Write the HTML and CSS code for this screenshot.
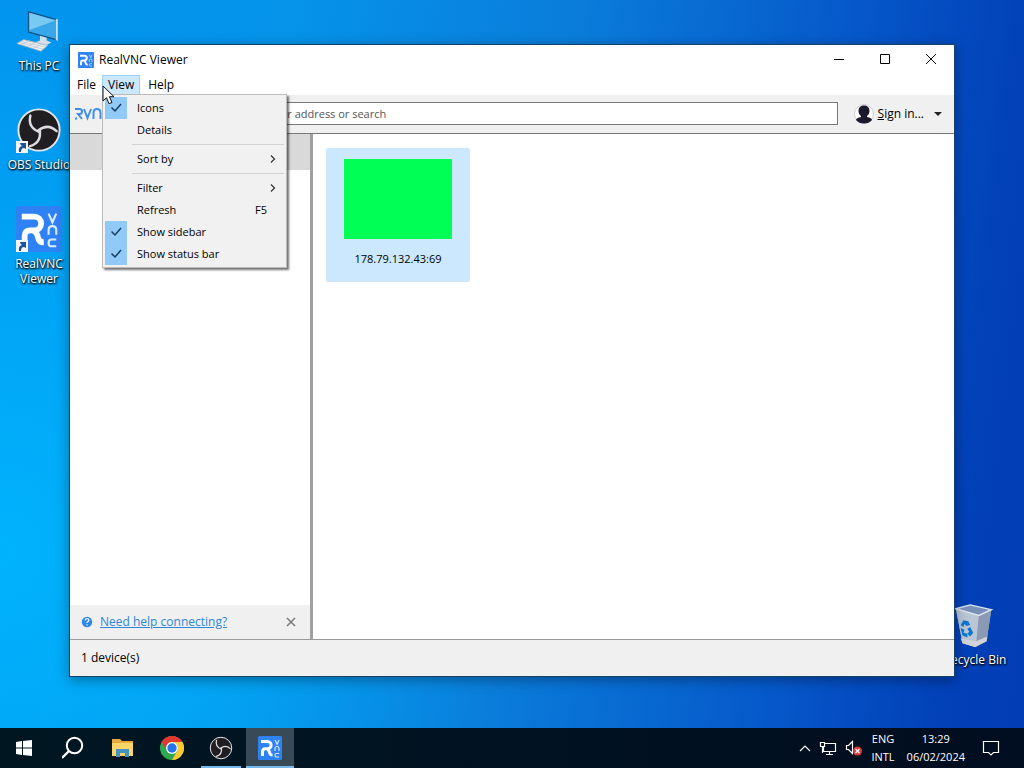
FILE: index.html
```html
<!DOCTYPE html>
<html lang="en">
<head>
<meta charset="utf-8">
<title>RealVNC Viewer</title>
<link rel="stylesheet" href="styles.css">
</head>
<body>
<svg class="defs" aria-hidden="true">
  <symbol id="vnc" viewBox="0 0 48 48">
    <rect width="48" height="48" rx="3" fill="#2f82f3"/>
    <path d="M6 11h13a7 7 0 0 1 0 14.500h-4q-6 0-6 6V40M18 26q4 1 5 7 1 5 6 5" fill="none" stroke="#fff" stroke-width="6"/>
    <path d="M34 8l4 9 4-9M34 30v-5q0-4 4-4t4 4v5M42 35h-5q-3 0-3 3.500t3 3.500h5" fill="none" stroke="#dcecff" stroke-width="2.200"/>
  </symbol>
  <symbol id="obs" viewBox="0 0 48 48">
    <circle cx="24" cy="24" r="21.500" fill="#211e21" stroke="#e8e6ec" stroke-width="2"/>
    <g fill="none" stroke="#dcdbe2" stroke-width="2.600" stroke-linecap="round">
      <path d="M24 26Q12 21 15 9"/>
      <path d="M24 26Q12 21 15 9" transform="rotate(120 24 25)"/>
      <path d="M24 26Q12 21 15 9" transform="rotate(240 24 25)"/>
    </g>
  </symbol>
  <symbol id="shortcut" viewBox="0 0 12 12">
    <path d="M0 0h12v12H0z" fill="#f4f6fa"/>
    <path d="M3 11q-1-5 3-6L4.500 3.500 4 2h6v6L8 7Q5 7 5 11z" fill="#1d5299"/>
  </symbol>
  <symbol id="check" viewBox="0 0 22 22">
    <path d="M6.500 10.500l3.500 3.500 6-7" fill="none" stroke="#123e63" stroke-width="1.500"/>
  </symbol>
  <symbol id="chevron" viewBox="0 0 6 10">
    <path d="M1 1.500L4.500 5 1 8.500" fill="none" stroke="#333" stroke-width="1.200"/>
  </symbol>
</svg>

<main class="desktop">
  <a href="#" class="shortcut this-pc">
    <svg class="shortcut-icon" viewBox="0 0 48 48">
      <path d="M13 4l29 8v21l-29-8z" fill="#38a7ea" stroke="#164f80" stroke-width="1.200"/>
      <path d="M14 5l27 8-27 10z" fill="#79c9f5"/>
      <path d="M42 12h1v22l-1-1z" fill="#d9e5ee" stroke="#d9e5ee"/>
      <path d="M25 29l7 2v3l5 2-6 3-11-3 5-2z" fill="#d4dfe8"/>
      <path d="M8 33l25 6-7 6-25-8z" fill="#eff3f6" stroke="#a8b5c1"/>
      <path d="M6 35l25 6M4 36l24 7M14 34l-8 4M20 36l-8 4M26 38l-8 4" stroke="#b4c0ca" stroke-width=".7"/>
    </svg>
    <span>This PC</span>
  </a>
  <a href="#" class="shortcut obs-studio">
    <span class="badged"><svg class="shortcut-icon"><use href="#obs"/></svg><svg class="badge"><use href="#shortcut"/></svg></span>
    <span>OBS Studio</span>
  </a>
  <a href="#" class="shortcut vnc-viewer">
    <span class="badged"><svg class="shortcut-icon"><use href="#vnc"/></svg><svg class="badge"><use href="#shortcut"/></svg></span>
    <span>RealVNC Viewer</span>
  </a>
  <a href="#" class="shortcut recycle-bin">
    <svg class="shortcut-icon" viewBox="0 0 48 48">
      <path d="M4 7l7 36 13 4 12-6 5-33-13 5z" fill="#a9b5c8"/>
      <path d="M4 7l24 7-3 33-14-4z" fill="#bac5d5"/>
      <path d="M28 14l13-6-5 33-11 6z" fill="#8b99b3"/>
      <path d="M4 7l15-4 22 5-13 6z" fill="#7890b8" stroke="#dce5ef" stroke-width="1.500"/>
      <path d="M9 38l2 5 13 4 12-6 1-5-12 5z" fill="#d3d2d6"/>
      <path d="M9 24l3-5 5 1 2 4-4 1-2-2-1 3zM19 26l3 6-3 4-3-3 2-2-2-3zM9 27l4 2-1 3 4 1v4l-5-2z" fill="#0878ce"/>
    </svg>
    <span>Recycle Bin</span>
  </a>

  <section class="window" aria-label="RealVNC Viewer">
    <header class="titlebar">
      <svg class="app-icon"><use href="#vnc"/></svg>
      <h1 class="title">RealVNC Viewer</h1>
      <button class="caption" aria-label="Minimize"><svg viewBox="0 0 12 12"><path d="M1 5.500h10"/></svg></button>
      <button class="caption" aria-label="Maximize"><svg viewBox="0 0 12 12"><path d="M1.500 .5h9v9h-9z"/></svg></button>
      <button class="caption" aria-label="Close"><svg viewBox="0 0 12 12"><path d="M1 0l10 10M11 0L1 10"/></svg></button>
    </header>
    <nav class="menubar">
      <button class="menu-title">File</button>
      <div class="menu-host">
        <button class="menu-title open" aria-expanded="true">View</button>
        <div class="menu" role="menu">
          <button class="item" role="menuitemcheckbox" aria-checked="true"><svg class="tick"><use href="#check"/></svg><span class="name">Icons</span></button>
          <button class="item" role="menuitem"><span class="no-tick"></span><span class="name">Details</span></button>
          <hr>
          <button class="item" role="menuitem"><span class="no-tick"></span><span class="name">Sort by</span><svg class="more"><use href="#chevron"/></svg></button>
          <hr>
          <button class="item" role="menuitem"><span class="no-tick"></span><span class="name">Filter</span><svg class="more"><use href="#chevron"/></svg></button>
          <button class="item" role="menuitem"><span class="no-tick"></span><span class="name">Refresh</span><span class="key">F5</span></button>
          <button class="item" role="menuitemcheckbox" aria-checked="true"><svg class="tick"><use href="#check"/></svg><span class="name">Show sidebar</span></button>
          <button class="item" role="menuitemcheckbox" aria-checked="true"><svg class="tick"><use href="#check"/></svg><span class="name">Show status bar</span></button>
        </div>
        <svg class="pointer" viewBox="0 0 13 20"><path d="M1 1v15l3.500-3.300 2.500 6 3-1.200-2.600-5.800H12z" fill="#fff" stroke="#111"/></svg>
      </div>
      <button class="menu-title">Help</button>
    </nav>
    <div class="toolbar">
      <svg class="brand" viewBox="0 0 40 14"><path d="M0 2h4.500q2.500 0 2.500 2.500T4.500 7H3l4 5M0 12l2-1M9 2l3.500 9L16 2M18.500 12V6q0-4 3.500-4t3.500 4v6M35 2h-3q-4 0-4 5t4 5h3" fill="none" stroke="#3f8eea" stroke-width="2"/></svg>
      <input class="search" type="text" aria-label="Address or search" placeholder="Enter a VNC Server address or search">
      <button class="sign-in">
        <svg class="avatar" viewBox="0 0 20 20"><circle cx="10" cy="10" r="9.500" fill="#fff" stroke="#ccd"/><path d="M10 1.500c4 0 5.500 2.500 5.500 5.500 0 2-1 4-2.500 5v1c3 .5 5 1.500 5 3-2 2.500-5 3.500-8 3.500S4 18.500 2 16c0-1.500 2-2.500 5-3v-1C5.500 11 4.500 9 4.500 7c0-3 1.500-5.500 5.500-5.500z" fill="#1b1a2c"/></svg>
        <span><u>S</u>ign in...</span>
        <svg class="caret" viewBox="0 0 8 4"><path d="M0 0h8L4 4z" fill="#222"/></svg>
      </button>
    </div>
    <div class="content">
      <aside class="sidebar">
        <div class="group"></div>
        <div class="help">
          <svg class="help-icon" viewBox="0 0 12 12"><circle cx="6" cy="6" r="5.200" fill="#2d86e8"/><path d="M4.200 4.500q0-1.800 1.900-1.800t1.800 1.600q0 1-1.800 2v.7M6 8.200v1.300" fill="none" stroke="#fff" stroke-width="1.200"/></svg>
          <a href="#" class="help-link">Need help connecting?</a>
          <button class="dismiss" aria-label="Dismiss"><svg viewBox="0 0 10 10"><path d="M1 1l8 8M9 1L1 9" stroke="#777" stroke-width="1.500"/></svg></button>
        </div>
      </aside>
      <div class="devices">
        <button class="device"><span class="preview"></span><span>178.79.132.43:69</span></button>
      </div>
    </div>
    <footer class="status">1 device(s)</footer>
  </section>
</main>

<footer class="taskbar">
  <button class="task" aria-label="Start"><svg viewBox="0 0 24 24"><path d="M3 6l6-1v6.500H3zM10 5l9-1v7.500h-9zM3 12.500h6V19l-6-1zM10 12.500h9V20l-9-1z" fill="#fff"/></svg></button>
  <button class="task" aria-label="Search"><svg viewBox="0 0 24 24"><circle cx="12.500" cy="9.500" r="7.700" fill="none" stroke="#fff" stroke-width="2"/><path d="M7 15l-7 7" stroke="#fff" stroke-width="2.300"/></svg></button>
  <button class="task" aria-label="File Explorer"><svg viewBox="0 0 24 24"><path d="M1 3h8l2 2h11v15H1z" fill="#e5ab3a"/><path d="M1 7h21v13H1z" fill="#fbd568"/><path d="M5 13h13v8h-4v-4H9v4H5z" fill="#4592c3"/></svg></button>
  <button class="task" aria-label="Chrome"><svg viewBox="0 0 24 24"><circle cx="12" cy="12" r="12" fill="#2da94f"/><path d="M1.600 6A12 12 0 0 1 22.400 6H12a6 6 0 0 0-5.200 9z" fill="#e3382d"/><path d="M22.400 6A12 12 0 0 1 12 24l5.200-9A6 6 0 0 0 12 6z" fill="#fdca30"/><circle cx="12" cy="12" r="6" fill="#fff"/><circle cx="12" cy="12" r="4.700" fill="#2773e8"/></svg></button>
  <button class="task running" aria-label="OBS Studio"><svg><use href="#obs"/></svg></button>
  <button class="task running active" aria-label="RealVNC Viewer"><svg><use href="#vnc"/></svg></button>
  <div class="tray">
    <button class="tray-button" aria-label="Show hidden icons"><svg class="up" viewBox="0 0 12 8"><path d="M1 7l5-5 5 5"/></svg></button>
    <button class="tray-button" aria-label="Network"><svg class="net" viewBox="0 0 18 16"><path d="M6 3.500h10.500v8H4.500V7M10.500 11.500V14M7 14.500h7M1.500 2.500h4v4h-4zM3.500 6.500V13"/></svg></button>
    <button class="tray-button" aria-label="Volume muted"><svg class="sound" viewBox="0 0 18 16"><path d="M1.500 5.500h2l4-4v12l-4-4h-2z"/><circle cx="12.500" cy="11" r="4.500" fill="#d83b3b" stroke="none"/><path d="M10.500 9l4 4M14.500 9l-4 4"/></svg></button>
    <button class="tray-text"><span>ENG</span><span>INTL</span></button>
    <button class="tray-text clock"><span>13:29</span><span>06/02/2024</span></button>
    <button class="tray-button" aria-label="Notifications"><svg class="note" viewBox="0 0 18 18"><path d="M1.500 2.500h15v11h-5L9 16l-2.500-2.500h-5z"/></svg></button>
  </div>
</footer>
</body>
</html>
```
FILE: styles.css
```css
* { box-sizing: border-box; }
html, body { height: 100%; }
body {
  margin: 0;
  display: flex;
  flex-direction: column;
  overflow: hidden;
  font: 12px/16px "Open Sans", "Noto Sans", sans-serif;
  color: #000;
  background:
    radial-gradient(ellipse 50% 75% at 0 72%, rgba(0, 184, 255, .85), rgba(0, 184, 255, 0)),
    linear-gradient(97deg, #0293ee 0%, #0594ea 25%, #0a7cda 52%, #0659ca 76%, #0241b8 92%, #033cb4 100%);
}
button { border: 0; padding: 0; background: none; font: inherit; color: inherit; }
svg { display: block; flex: none; }
.defs { position: absolute; width: 0; height: 0; }
.desktop { position: relative; flex: 1; }

/* Desktop shortcuts */
.shortcut {
  position: absolute;
  width: 72px;
  display: flex;
  flex-direction: column;
  align-items: center;
  gap: 4px;
  color: #fff;
  line-height: 15px;
  text-align: center;
  text-decoration: none;
  text-shadow: 1px 1px 2px #000, 0 1px 2px #000;
}
.shortcut-icon { width: 46px; height: 46px; }
.this-pc { left: 3px; top: 8px; }
.obs-studio { left: 3px; top: 107px; }
.vnc-viewer { left: 3px; top: 206px; }
.recycle-bin { right: 13px; bottom: 61px; }
.badged { position: relative; }
.badge { position: absolute; left: 0; bottom: 0; width: 12px; height: 12px; }

/* Window */
.window {
  position: absolute;
  inset: 44px 69px 51px 69px;
  display: flex;
  flex-direction: column;
  border: 1px solid #17436b;
  background: #fff;
  box-shadow: 0 3px 12px rgba(0, 0, 0, .35);
}
.titlebar { display: flex; align-items: center; height: 30px; padding-left: 8px; }
.app-icon { width: 16px; height: 16px; }
.title { flex: 1; margin: 0 0 0 5px; font-size: 12px; font-weight: 400; }
.caption { width: 46px; height: 30px; display: grid; place-items: center; }
.caption svg { width: 12px; height: 12px; fill: none; stroke: #000; }
.menubar { display: flex; height: 20px; padding-left: 1px; }
.menu-title { height: 20px; padding: 0 7px; border: 1px solid transparent; line-height: 18px; }
.menu-title:first-child { padding: 0 5px; }
.menu-host { position: relative; }
.menu-title.open { padding: 0 5px; background: #cce8ff; border-color: #99d1ff; }
.menu {
  position: absolute;
  z-index: 2;
  left: 0;
  top: 19px;
  width: 185px;
  padding: 2px;
  border: 1px solid #bbb;
  background: #f1f1f1;
  box-shadow: 2px 2px 2px rgba(0, 0, 0, .55);
  font-size: 11px;
}
.item { display: flex; align-items: center; width: 100%; height: 22px; text-align: left; }
.tick, .no-tick { width: 22px; height: 22px; }
.tick { background: #91c9f7; }
.name { flex: 1; margin-left: 10px; }
.more { width: 6px; height: 10px; margin-right: 8px; }
.key { margin-right: 17px; }
.menu hr { height: 1px; margin: 3px 0 3px 27px; border: 0; background: #d2d2d2; }
.pointer { position: absolute; z-index: 3; left: 0; top: 10px; width: 13px; height: 20px; }

.toolbar {
  display: flex;
  align-items: center;
  height: 39px;
  padding: 0 12px 1px 5px;
  background: #f0f0f0;
  border-bottom: 1px solid #777;
}
.brand { width: 40px; height: 14px; }
.search {
  flex: 1;
  min-width: 0;
  height: 23px;
  margin: 0 16px 0 75px;
  padding: 0 4px;
  border: 1px solid #777;
  background: #fff;
  font: inherit;
  font-size: 11px;
}
.search::placeholder { color: #555; opacity: 1; }
.sign-in { display: flex; align-items: center; gap: 4px; }
.avatar { width: 20px; height: 20px; }
.caret { width: 8px; height: 4px; margin-left: 6px; }

.content { display: flex; flex: 1; min-height: 0; }
.sidebar { display: flex; flex-direction: column; width: 243px; border-right: 3px solid #a0a0a0; }
.group { height: 36px; background: #d9d9d9; }
.help {
  display: flex;
  align-items: center;
  height: 34px;
  margin-top: auto;
  padding: 0 14px 0 11px;
  background: #f0f0f0;
}
.help-icon { width: 12px; height: 12px; }
.help-link { flex: 1; margin-left: 7px; color: #2d86d8; }
.dismiss svg { width: 10px; height: 10px; }
.devices { flex: 1; padding: 14px 13px; }
.device {
  display: flex;
  flex-direction: column;
  align-items: center;
  gap: 12px;
  width: 144px;
  height: 134px;
  padding-top: 11px;
  border-radius: 2px;
  background: #cce8ff;
  font-size: 11px;
}
.preview { width: 108px; height: 80px; background: #00ff55; }
.status { height: 37px; padding: 0 11px; border-top: 1px solid #999; background: #f0f0f0; line-height: 36px; }

/* Taskbar */
.taskbar { display: flex; gap: 1px; height: 40px; padding-left: 1px; background: linear-gradient(90deg, #001722, #010d20); color: #fff; }
.task { display: grid; place-items: center; width: 48px; }
.task svg { width: 24px; height: 24px; }
.running { background: linear-gradient(#76b9ed, #76b9ed) center bottom / 40px 2px no-repeat; }
.active { background-color: #384a55; background-size: 48px 2px; }
.tray { display: flex; align-items: center; gap: 8px; margin-left: auto; padding-right: 24px; }
.tray-button svg { fill: none; stroke: #fff; stroke-width: 1.2; }
.up { width: 12px; height: 8px; }
.net, .sound { width: 18px; height: 16px; }
.note { width: 18px; height: 18px; }
.tray-text { display: flex; flex-direction: column; align-items: center; gap: 2px; font-size: 11px; }
.clock { margin: 0 9px 0 4px; }
```
